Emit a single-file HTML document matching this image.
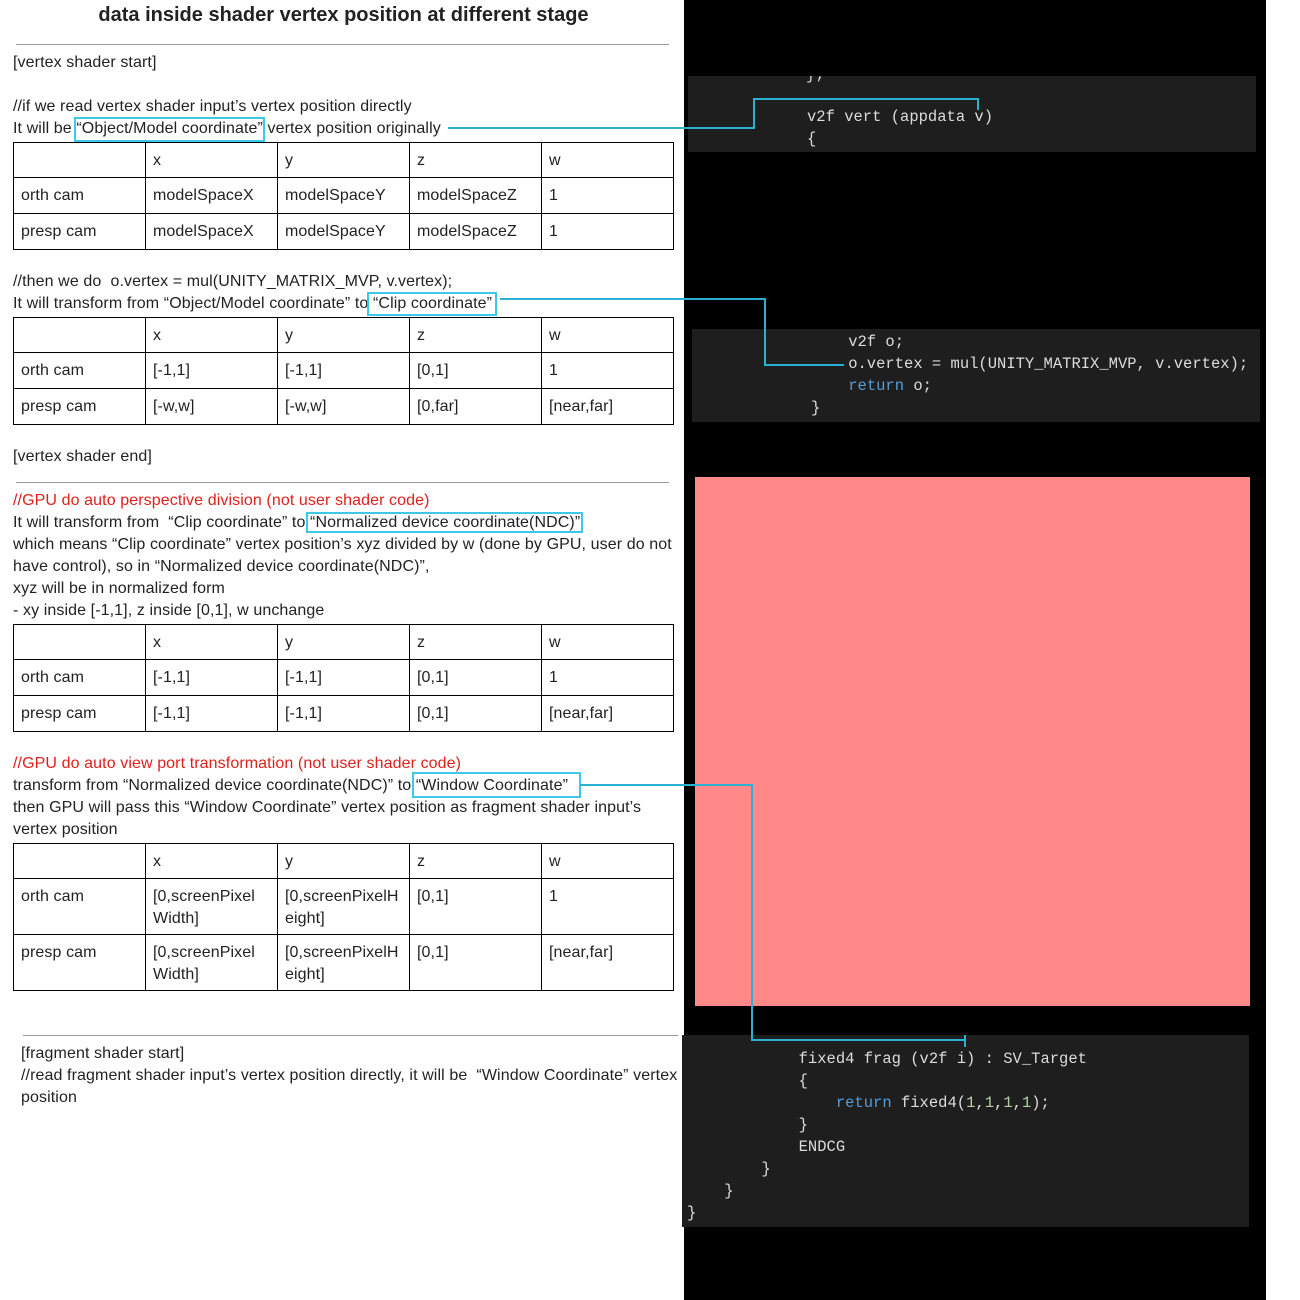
<!DOCTYPE html>
<html><head><meta charset="utf-8"><style>
*{margin:0;padding:0;box-sizing:border-box}
body{width:1300px;height:1300px;background:#fff;position:relative;overflow:hidden;font-family:"Liberation Sans",Arial,sans-serif;color:#222}
.t{position:absolute;font-size:16px;line-height:20px;white-space:nowrap;letter-spacing:0.1px;margin-top:1px}
.r{color:#e0201c}
.hr{position:absolute;height:1px;background:#999}
table{position:absolute;left:13px;border-collapse:collapse;font-size:16px;letter-spacing:0.1px;width:661px;table-layout:fixed}
td{border:1px solid #000;padding:7px 7px 0 7px;vertical-align:top;line-height:22px;height:36px}
tr:first-child td{height:35px}
td.tall{height:56px}
.c{position:absolute;font-family:"Liberation Mono",monospace;font-size:15.5px;line-height:22px;color:#dcdcdc;white-space:pre}
.k{color:#569cd6}.n{color:#b5cea8}
.box{position:absolute;border:2px solid #3cc8e8}
.ln{position:absolute;background:#2ab0d0}
</style></head><body>
<div class="t" style="left:0;width:687px;text-align:center;top:4px;font-size:20px;font-weight:bold;letter-spacing:0">data inside shader vertex position at different stage</div>
<div class="hr" style="left:16px;width:653px;top:44px"></div>
<div class="t" style="left:13px;top:52px">[vertex shader start]</div>
<div class="t" style="left:13px;top:96px">//if we read vertex shader input’s vertex position directly</div>
<div class="t" style="left:13px;top:118px">It will be “Object/Model coordinate” vertex position originally</div>
<table style="top:142px"><tr><td></td><td>x</td><td>y</td><td>z</td><td>w</td></tr>
<tr><td>orth cam</td><td>modelSpaceX</td><td>modelSpaceY</td><td>modelSpaceZ</td><td>1</td></tr>
<tr><td>presp cam</td><td>modelSpaceX</td><td>modelSpaceY</td><td>modelSpaceZ</td><td>1</td></tr></table>
<div class="t" style="left:13px;top:271px">//then we do &nbsp;o.vertex = mul(UNITY_MATRIX_MVP, v.vertex);</div>
<div class="t" style="left:13px;top:293px">It will transform from “Object/Model coordinate” to “Clip coordinate”</div>
<table style="top:317px"><tr><td></td><td>x</td><td>y</td><td>z</td><td>w</td></tr>
<tr><td>orth cam</td><td>[-1,1]</td><td>[-1,1]</td><td>[0,1]</td><td>1</td></tr>
<tr><td>presp cam</td><td>[-w,w]</td><td>[-w,w]</td><td>[0,far]</td><td>[near,far]</td></tr></table>
<div class="t" style="left:13px;top:446px">[vertex shader end]</div>
<div class="hr" style="left:16px;width:653px;top:482px"></div>
<div class="t r" style="left:13px;top:490px">//GPU do auto perspective division (not user shader code)</div>
<div class="t" style="left:13px;top:512px">It will transform from &nbsp;“Clip coordinate” to “Normalized device coordinate(NDC)”</div>
<div class="t" style="left:13px;top:534px">which means “Clip coordinate” vertex position’s xyz divided by w (done by GPU, user do not</div>
<div class="t" style="left:13px;top:556px">have control), so in “Normalized device coordinate(NDC)”,</div>
<div class="t" style="left:13px;top:578px">xyz will be in normalized form</div>
<div class="t" style="left:13px;top:600px">- xy inside [-1,1], z inside [0,1], w unchange</div>
<table style="top:624px"><tr><td></td><td>x</td><td>y</td><td>z</td><td>w</td></tr>
<tr><td>orth cam</td><td>[-1,1]</td><td>[-1,1]</td><td>[0,1]</td><td>1</td></tr>
<tr><td>presp cam</td><td>[-1,1]</td><td>[-1,1]</td><td>[0,1]</td><td>[near,far]</td></tr></table>
<div class="t r" style="left:13px;top:753px">//GPU do auto view port transformation (not user shader code)</div>
<div class="t" style="left:13px;top:775px">transform from “Normalized device coordinate(NDC)” to “Window Coordinate”</div>
<div class="t" style="left:13px;top:797px">then GPU will pass this “Window Coordinate” vertex position as fragment shader input’s</div>
<div class="t" style="left:13px;top:819px">vertex position</div>
<table style="top:843px"><tr><td></td><td>x</td><td>y</td><td>z</td><td>w</td></tr>
<tr><td class="tall">orth cam</td><td>[0,screenPixel Width]</td><td>[0,screenPixelH eight]</td><td>[0,1]</td><td>1</td></tr>
<tr><td class="tall">presp cam</td><td>[0,screenPixel Width]</td><td>[0,screenPixelH eight]</td><td>[0,1]</td><td>[near,far]</td></tr></table>
<div class="hr" style="left:23px;width:655px;top:1035px"></div>
<div class="t" style="left:21px;top:1043px">[fragment shader start]</div>
<div class="t" style="left:21px;top:1065px">//read fragment shader input’s vertex position directly, it will be &nbsp;“Window Coordinate” vertex</div>
<div class="t" style="left:21px;top:1087px">position</div>

<div style="position:absolute;left:684px;top:0;width:582px;height:1300px;background:#000"></div>
<div style="position:absolute;left:688px;top:76px;width:568px;height:76px;background:#1e1e1e;overflow:hidden">
<div class="c" style="left:118px;top:-12px">};</div></div>
<div style="position:absolute;left:692px;top:329px;width:568px;height:93px;background:#1e1e1e"></div>
<div style="position:absolute;left:695px;top:477px;width:555px;height:529px;background:#ff8888"></div>
<div style="position:absolute;left:682px;top:1035px;width:567px;height:192px;background:#1e1e1e"></div>
<div class="c" style="left:807px;top:106px">v2f vert (appdata v)
{</div>
<div class="c" style="left:811px;top:331px">    v2f o;
    o.vertex = mul(UNITY_MATRIX_MVP, v.vertex);
    <span class="k">return</span> o;
}</div>
<div class="c" style="left:687px;top:1048px">            fixed4 frag (v2f i) : SV_Target
            {
                <span class="k">return</span> fixed4(<span class="n">1</span>,<span class="n">1</span>,<span class="n">1</span>,<span class="n">1</span>);
            }
            ENDCG
        }
    }
}</div>

<div class="box" style="left:74px;top:117px;width:191px;height:25px"></div>
<div class="box" style="left:367px;top:292px;width:130px;height:24px"></div>
<div class="box" style="left:306px;top:512px;width:277px;height:21px"></div>
<div class="box" style="left:412px;top:772px;width:169px;height:26px"></div>

<div class="ln" style="left:448px;top:127px;width:307px;height:2px"></div>
<div class="ln" style="left:753px;top:98px;width:2px;height:31px"></div>
<div class="ln" style="left:753px;top:98px;width:226px;height:2px"></div>
<div class="ln" style="left:977px;top:98px;width:2px;height:12px"></div>

<div class="ln" style="left:500px;top:298px;width:266px;height:2px"></div>
<div class="ln" style="left:764px;top:298px;width:2px;height:68px"></div>
<div class="ln" style="left:764px;top:364px;width:80px;height:2px"></div>

<div class="ln" style="left:580px;top:784px;width:173px;height:2px"></div>
<div class="ln" style="left:751px;top:784px;width:2px;height:257px"></div>
<div class="ln" style="left:751px;top:1039px;width:215px;height:2px"></div>
<div class="ln" style="left:964px;top:1035px;width:2px;height:12px"></div>
</body></html>
